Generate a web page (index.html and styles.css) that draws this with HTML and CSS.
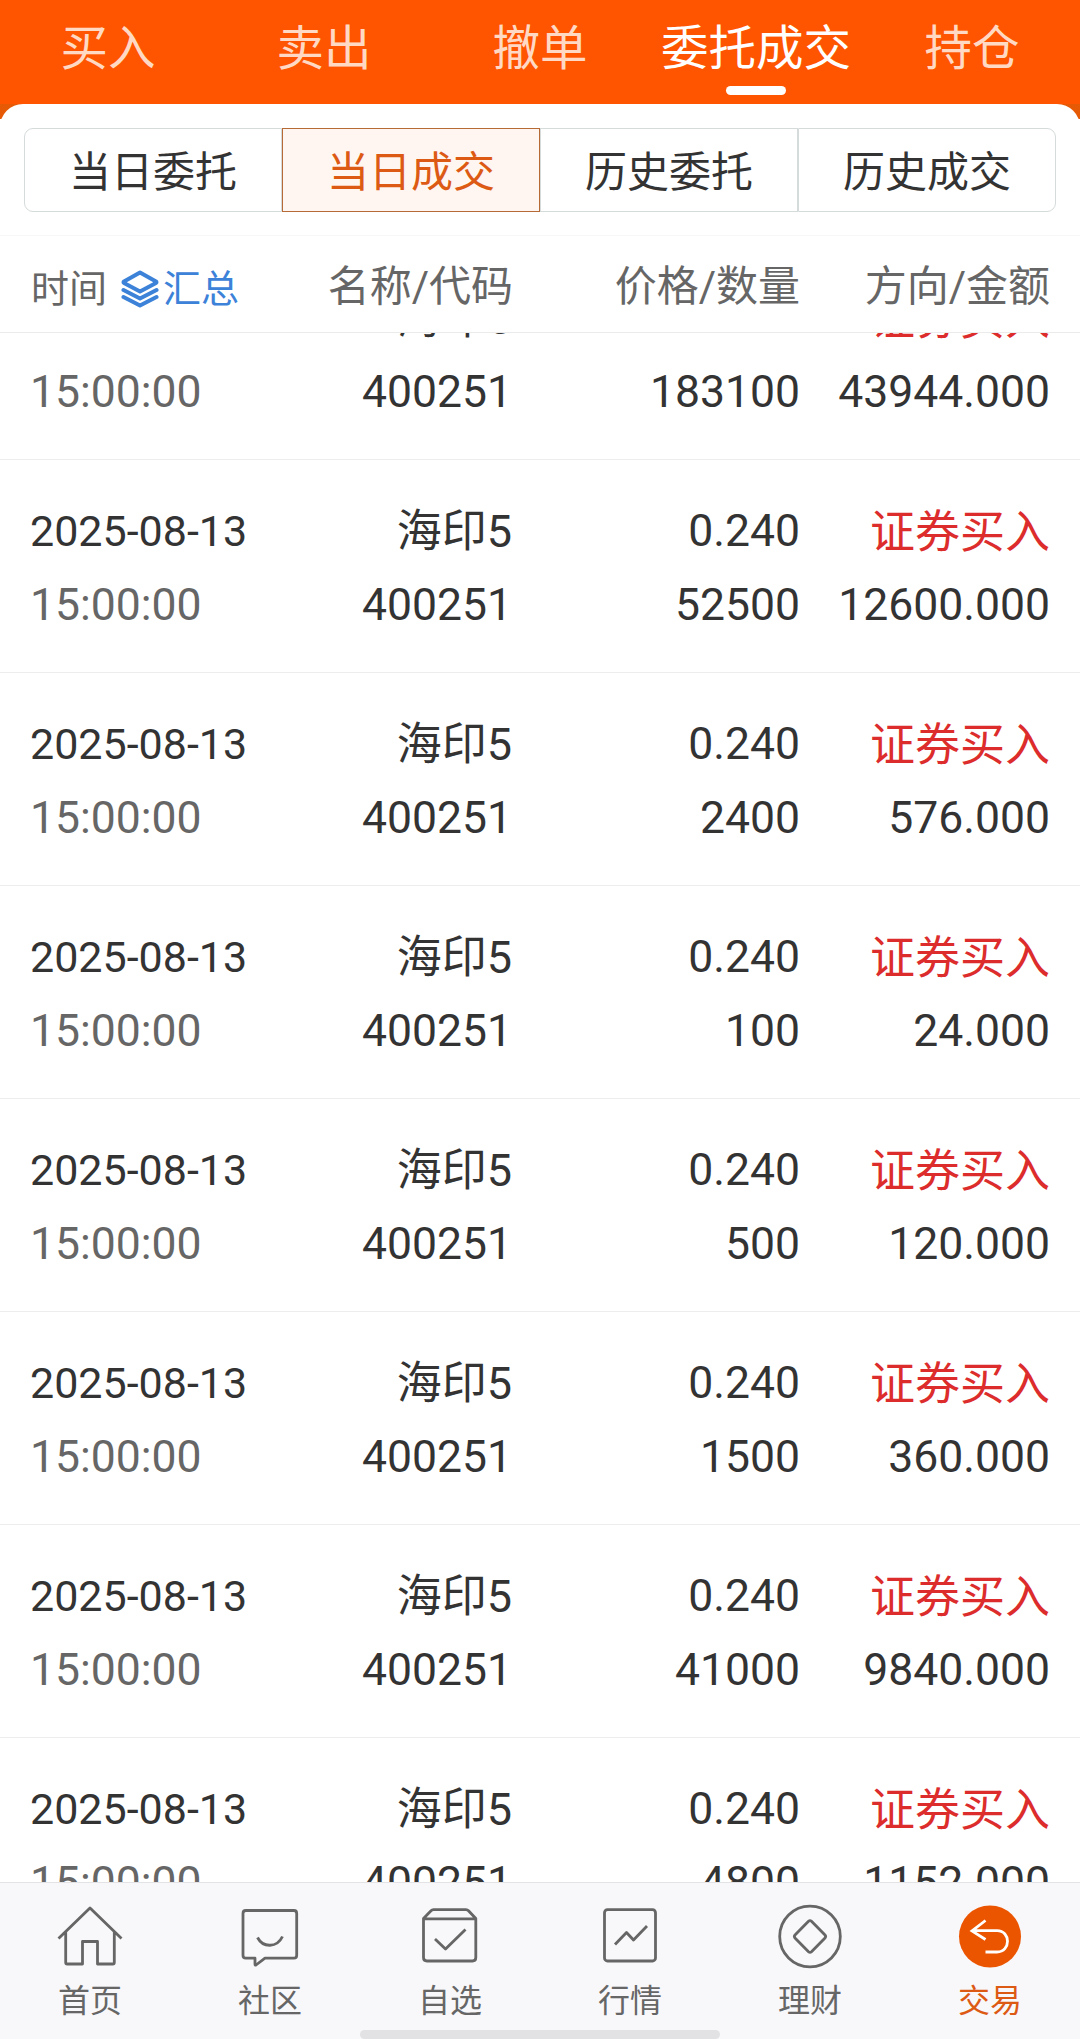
FILE: index.html
```html
<!DOCTYPE html>
<html lang="zh-CN">
<head>
<meta charset="utf-8">
<title>当日成交</title>
<link rel="stylesheet" href="styles.css">
</head>
<body>
<nav class="tabs">
  <a class="tab">买入</a>
  <a class="tab">卖出</a>
  <a class="tab">撤单</a>
  <a class="tab tab-active">委托成交</a>
  <a class="tab">持仓</a>
</nav>
<div class="backdrop">
  <div class="panel">
    <div class="segments">
      <div class="segment">当日委托</div>
      <div class="segment segment-active">当日成交</div>
      <div class="segment">历史委托</div>
      <div class="segment">历史成交</div>
    </div>
  </div>
</div>
<div class="columns head">
  <div class="head-time">
    <span>时间</span>
    <svg class="layers" width="38" height="38" viewBox="0 0 38 38"><path d="M19 2.5 35 11.5Q36 12.2 35 13L19 21.5 3 13Q2 12.2 3 11.5Z"/><path d="M2.5 20 19 28.5 35.5 20M2.5 27 19 35.5 35.5 27"/></svg>
    <span class="summary">汇总</span>
  </div>
  <div>名称/代码</div>
  <div>价格/数量</div>
  <div>方向/金额</div>
</div>
<main class="list">
  <div class="columns row"><div><p class="date">2025-08-13</p><p class="time">15:00:00</p></div><div><p class="name">海印5</p><p>400251</p></div><div><p class="price">0.240</p><p>183100</p></div><div><p class="buy">证券买入</p><p>43944.000</p></div></div>
  <div class="columns row"><div><p class="date">2025-08-13</p><p class="time">15:00:00</p></div><div><p class="name">海印5</p><p>400251</p></div><div><p class="price">0.240</p><p>52500</p></div><div><p class="buy">证券买入</p><p>12600.000</p></div></div>
  <div class="columns row"><div><p class="date">2025-08-13</p><p class="time">15:00:00</p></div><div><p class="name">海印5</p><p>400251</p></div><div><p class="price">0.240</p><p>2400</p></div><div><p class="buy">证券买入</p><p>576.000</p></div></div>
  <div class="columns row"><div><p class="date">2025-08-13</p><p class="time">15:00:00</p></div><div><p class="name">海印5</p><p>400251</p></div><div><p class="price">0.240</p><p>100</p></div><div><p class="buy">证券买入</p><p>24.000</p></div></div>
  <div class="columns row"><div><p class="date">2025-08-13</p><p class="time">15:00:00</p></div><div><p class="name">海印5</p><p>400251</p></div><div><p class="price">0.240</p><p>500</p></div><div><p class="buy">证券买入</p><p>120.000</p></div></div>
  <div class="columns row"><div><p class="date">2025-08-13</p><p class="time">15:00:00</p></div><div><p class="name">海印5</p><p>400251</p></div><div><p class="price">0.240</p><p>1500</p></div><div><p class="buy">证券买入</p><p>360.000</p></div></div>
  <div class="columns row"><div><p class="date">2025-08-13</p><p class="time">15:00:00</p></div><div><p class="name">海印5</p><p>400251</p></div><div><p class="price">0.240</p><p>41000</p></div><div><p class="buy">证券买入</p><p>9840.000</p></div></div>
  <div class="columns row"><div><p class="date">2025-08-13</p><p class="time">15:00:00</p></div><div><p class="name">海印5</p><p>400251</p></div><div><p class="price">0.240</p><p>4800</p></div><div><p class="buy">证券买入</p><p>1152.000</p></div></div>
</main>
<footer class="dock">
  <a class="dock-item">
    <svg class="icon" width="68" height="68" viewBox="0 0 68 68"><path d="M2.5 35.5 34 5 65.500 35.500M9.700 29V59.500Q9.700 61 11.200 61H26.500V38.500H41.500V61H56.800Q58.300 61 58.300 59.500V29"/></svg>
    <span>首页</span>
  </a>
  <a class="dock-item">
    <svg class="icon" width="68" height="68" viewBox="0 0 68 68"><path d="M9.800 7.500H58Q60.700 7.500 60.700 10.500V52.300Q60.700 55.200 58 55.200H29L20 62Q19 62.500 19 61V55.200H9.800Q7 55.200 7 52.300V10.500Q7 7.500 9.800 7.500ZM21.500 34.500C27 45 41 45 46.500 33.500"/></svg>
    <span>社区</span>
  </a>
  <a class="dock-item">
    <svg class="icon" width="68" height="68" viewBox="0 0 68 68"><path d="M7.500 15.500 15 7.700Q16 6.600 17.500 6.600H50Q51.500 6.600 52.500 7.700L59.800 15.500V54.500Q59.800 58 56.500 58H11Q7.500 58 7.500 54.500ZM7.500 15.800H59.800M19 36 29.500 46 49.500 26.500"/></svg>
    <span>自选</span>
  </a>
  <a class="dock-item">
    <svg class="icon" width="68" height="68" viewBox="0 0 68 68"><rect x="8.500" y="6.700" width="51" height="51.300" rx="3"/><path d="M19 41.500 30.500 29.500 37.500 37 51 23"/></svg>
    <span>行情</span>
  </a>
  <a class="dock-item">
    <svg class="icon" width="68" height="68" viewBox="0 0 68 68"><circle cx="34" cy="33.500" r="30.300"/><path d="M32.500 18.300Q34 17 35.500 18.300L49 32Q50.300 33.500 49 35L35.500 48.700Q34 50 32.500 48.700L19 35Q17.700 33.500 19 32Z"/></svg>
    <span>理财</span>
  </a>
  <a class="dock-item dock-active">
    <svg class="icon" width="68" height="68" viewBox="0 0 68 68"><circle class="disc" cx="34" cy="33.500" r="31"/><path class="arrow" d="M29.500 17.500 16 28 29.500 36.500M16 27.700H41C55 27.700 55 49 41 49H29.500"/></svg>
    <span>交易</span>
  </a>
  <div class="home-bar"></div>
</footer>
</body>
</html>
```
FILE: styles.css
```css
* { box-sizing: border-box; }

body {
  margin: 0;
  width: 1080px;
  height: 2039px;
  overflow: hidden;
  display: flex;
  flex-direction: column;
  background: #fff;
  color: #333;
  font-family: Roboto, "Noto Sans CJK SC", sans-serif;
}

p { margin: 0; height: 74px; }

/* top tabs */
.tabs {
  flex: none;
  height: 104px;
  display: grid;
  grid-template-columns: repeat(5, 1fr);
  background: #ff5500;
}
.tab {
  position: relative;
  text-align: center;
  font-size: 47.5px;
  line-height: 99px;
  color: #ffd9c4;
}
.tab-active { color: #fff; }
.tab-active::after {
  content: "";
  position: absolute;
  left: 78px;
  top: 86px;
  width: 60px;
  height: 9px;
  border-radius: 5px;
  background: #fff;
}

/* segmented control */
.backdrop {
  flex: none;
  background: linear-gradient(#e65a05 15px, #fff 15px);
}
.panel {
  height: 132px;
  padding: 24px 24px 0;
  background: #fff;
  border-radius: 23px 23px 0 0;
  border-bottom: 1px solid #f7f7f7;
}
.segments {
  height: 84px;
  display: grid;
  grid-template-columns: repeat(4, 1fr);
}
.segment {
  padding-top: 5px;
  border: 1px solid #d5dadb;
  text-align: center;
  font-size: 42px;
  line-height: 77px;
}
.segment:first-child { border-radius: 9px 0 0 9px; }
.segment:last-child { border-radius: 0 9px 9px 0; }
.segment-active {
  border-color: #b66a35;
  background: #fff6f2;
  color: #dc5a14;
}

/* four-column table */
.columns {
  flex: none;
  display: grid;
  grid-template-columns: 282px 200px 288px 250px;
  padding: 0 30px;
  text-align: right;
}
.head {
  grid-template-columns: 283px 200px 287px 250px;
  height: 97px;
  border-bottom: 1px solid #ebebeb;
  font-size: 42px;
  line-height: 101px;
  color: #666;
}
.head-time {
  display: flex;
  align-items: center;
  height: 96px;
  padding: 9px 0 0 1px;
  font-size: 38px;
  line-height: 86px;
}
.layers {
  margin: 0 4px 0 14px;
  fill: none;
  stroke: #3c82d8;
  stroke-width: 4;
  stroke-linecap: round;
  stroke-linejoin: round;
}
.summary { color: #3c82d8; }

.list {
  flex: 1;
  min-height: 0;
  overflow: hidden;
}
.row {
  height: 213px;
  padding-top: 34px;
  border-bottom: 1px solid #ededed;
  font-size: 44.5px;
  line-height: 74px;
}
.row:first-child { margin-top: -86px; }
.row > :first-child { text-align: left; }
.date { font-size: 43px; line-height: 74px; }
.price { line-height: 75px; }
.name { font-size: 45px; line-height: 76px; }
.time { color: #666; }
.buy { font-size: 45px; line-height: 78px; color: #dc2c2c; }

/* bottom navigation */
.dock {
  position: relative;
  flex: none;
  height: 157px;
  display: grid;
  grid-template-columns: repeat(6, 1fr);
  background: #f8f8fa;
  border-top: 1px solid #e3e3e5;
}
.dock-item {
  display: flex;
  flex-direction: column;
  align-items: center;
  padding-top: 20px;
  font-size: 32px;
  line-height: 60px;
  color: #666;
}
.icon {
  fill: none;
  stroke: #666;
  stroke-width: 2.8;
  stroke-linecap: butt;
  stroke-linejoin: round;
}
.dock-active { color: #dc5a14; }
.disc { fill: #eb5500; stroke: none; }
.arrow { stroke: #fff; stroke-linejoin: miter; }
.home-bar {
  position: absolute;
  left: 360px;
  bottom: 0;
  width: 360px;
  height: 9px;
  border-radius: 5px;
  background: #e2e2e4;
}
```
